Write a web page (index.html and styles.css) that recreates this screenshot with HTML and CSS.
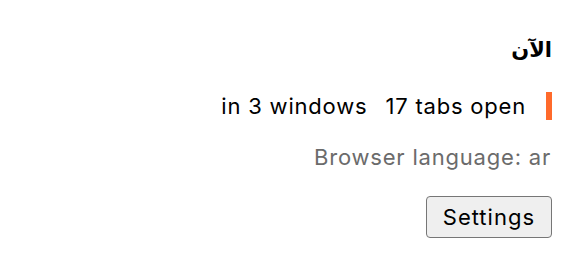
FILE: index.html
```html
<!DOCTYPE html>
<html lang="ar" dir="rtl">
<head>
    <meta charset="UTF-8">
    <meta name="viewport" content="width=device-width, initial-scale=1.0">
    <title>Tabs</title>
    <link rel="stylesheet" href="styles.css">
</head>
<body>

<div class="panel">
    <h1 class="when">الآن</h1>

    <div class="counts">
        <span class="count" dir="ltr">17 tabs open</span>
        <span class="count" dir="ltr">in 3 windows</span>
    </div>

    <p class="lang" dir="ltr">Browser language: ar</p>

    <div class="actions">
        <button class="settings-btn" dir="ltr">Settings</button>
    </div>
</div>

</body>
</html>
```

FILE: styles.css
```css
body {
    margin: 0;
    padding: 0;
    background-color: #fff;
    font-family: Inter, 'Liberation Sans', sans-serif;
    color: #000;
}
.panel {
    padding: 36px 32px 0 0;
    display: flex;
    flex-direction: column;
    align-items: flex-start;
}
.when {
    margin: 0;
    font-family: 'DejaVu Sans', sans-serif;
    font-size: 21px;
    font-weight: bold;
    line-height: 28px;
}
.counts {
    margin-top: 28px;
    display: flex;
    gap: 18px;
    border-right: 6px solid #ff6a2b;
    padding-right: 20px;
    font-size: 22px;
    letter-spacing: 0.8px;
    line-height: 28px;
}
.count {
    unicode-bidi: isolate;
}
.lang {
    margin: 24px 1px 0 0;
    color: #6b6b6b;
    font-size: 22px;
    letter-spacing: 0.8px;
    line-height: 26px;
}
.actions {
    margin-top: 26px;
}
.settings-btn {
    font-family: Inter, 'Liberation Sans', sans-serif;
    font-size: 22px;
    letter-spacing: 1px;
    line-height: 28px;
    padding: 6px 16px;
    background-color: #efefef;
    border: 1px solid #767676;
    border-radius: 4px;
    color: #000;
}
```
